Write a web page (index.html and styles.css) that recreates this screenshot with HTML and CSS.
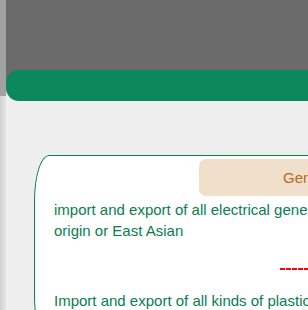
FILE: index.html
```html
<!DOCTYPE html>
<html lang="en">
<head>
  <meta charset="UTF-8" />
  <title>Services</title>
  <link rel="stylesheet" href="styles.css">
</head>
<body>
  <div class="page">
    <div class="side"></div>
    <div class="main">
      <div class="topbar"></div>
      <div class="content">
        <div class="card">
          <div class="card-head">
            <span class="badge">General Trading</span>
          </div>
          <p class="item">import and export of all electrical generators and spare parts of European, American origin or East Asian</p>
          <div class="divider"></div>
          <p class="item">Import and export of all kinds of plastic raw materials</p>
        </div>
      </div>
    </div>
  </div>
</body>
</html>
```

FILE: styles.css
```css
* {
  margin: 0;
  padding: 0;
  box-sizing: border-box;
}

html, body {
  height: 100%;
  overflow: hidden;
  background: #eeeeee;
  font-family: "Liberation Sans", Arial, sans-serif;
}

.page {
  display: flex;
  height: 100%;
}

.side {
  width: 6px;
  flex-shrink: 0;
  background:
    linear-gradient(#a2a2a2, #a2a2a2) top / 100% 96px no-repeat,
    linear-gradient(to right, #cfcfcf, #e6e6e6);
}

.main {
  flex: 1;
  min-width: 0;
  background: linear-gradient(#6b6b6b 86px, #eeeeee 86px);
}

.topbar {
  margin-top: 70px;
  height: 31px;
  background: #0b885c;
  border-radius: 13px 0 0 13px;
}

.content {
  padding: 54px 0 0 28px;
}

.card {
  width: 640px;
  background: #fff;
  border: 1px solid #0b7f52;
  border-radius: 15px / 46px;
  border-right: none;
  padding: 3px 0 30px 19px;
}

.card-head {
  display: flex;
  margin-left: 145px;
}

.badge {
  flex: 1;
  height: 37px;
  line-height: 37px;
  padding-left: 84px;
  background: #f0e0cb;
  border-radius: 7px;
  color: #b8681c;
  font-size: 15px;
}

.item {
  margin-top: 3px;
  width: 560px;
  color: #0a7d50;
  font-size: 15px;
  line-height: 21px;
}

.divider {
  height: 2px;
  width: 200px;
  margin: 27px 0 20px 226px;
  background: repeating-linear-gradient(to right, #f00 0 5px, transparent 5px 6px);
}
```
